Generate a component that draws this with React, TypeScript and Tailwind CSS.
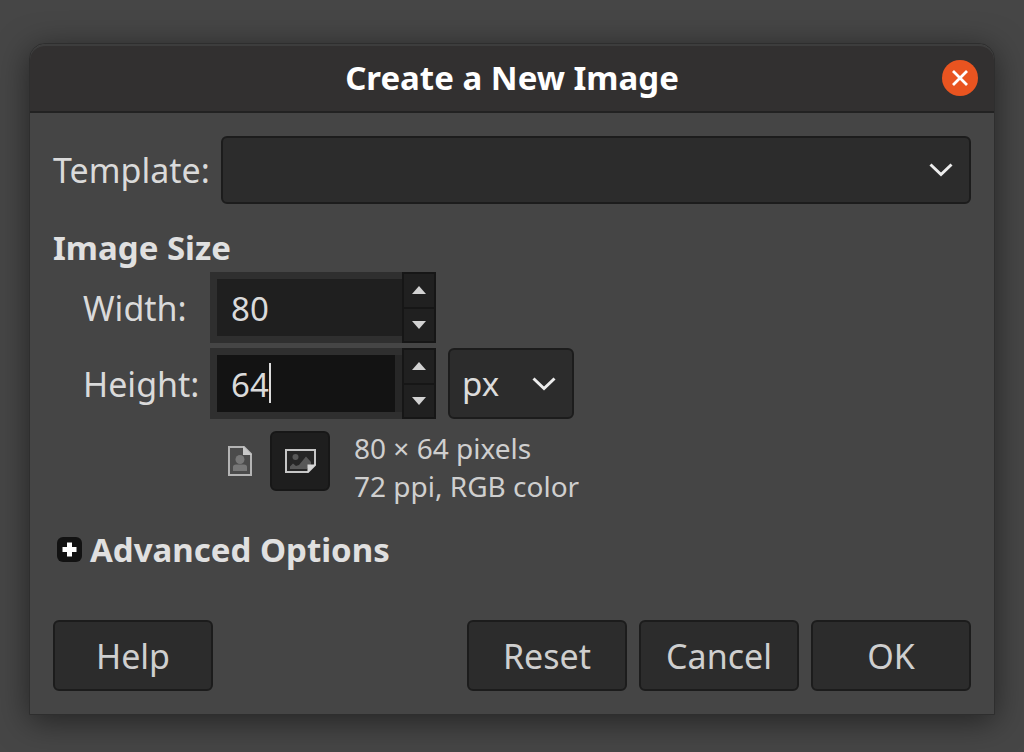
import { useState, type ReactNode } from "react";

function Chevron({ className }: { className: string }) {
  return (
    <svg
      viewBox="0 0 24 14"
      className={`pointer-events-none absolute top-1/2 h-3.5 w-6 -translate-y-1/2 ${className}`}
      fill="none"
      stroke="#ededed"
      strokeWidth="3"
      aria-hidden="true"
    >
      <path d="M1.5 1.5 12 11.5 22.5 1.5" />
    </svg>
  );
}

function SpinButton({ label, up, onClick }: { label: string; up?: boolean; onClick: () => void }) {
  return (
    <button
      type="button"
      aria-label={label}
      onClick={onClick}
      className={`flex w-full flex-1 items-center justify-center border-2 border-[#161616] bg-[#202020] ${up ? "border-b-1" : "border-t-1"}`}
    >
      <svg viewBox="0 0 14 8" className="h-2 w-3.5" fill="#d2d2d2" aria-hidden="true">
        {up ? <path d="M7 0 14 8H0Z" /> : <path d="M0 0h14L7 8Z" />}
      </svg>
    </button>
  );
}

function SpinBox({ id, name, value, active, onChange }: {
  id: string;
  name: string;
  value: number;
  active?: boolean;
  onChange: (value: number) => void;
}) {
  return (
    <div className="flex h-[71px] w-[226px] text-[33px]">
      <div className={`relative flex flex-1 border-y-[7px] border-l-[7px] border-[#2f2f2f] ${active ? "bg-[#272727] pr-[7px]" : "bg-[#1f1f1f]"}`}>
        <input
          id={id}
          type="text"
          inputMode="numeric"
          value={value}
          onChange={(e) => onChange(Number(e.target.value) || 0)}
          className={`w-full min-w-0 pt-0.5 pl-3.5 caret-transparent outline-none ${active ? "bg-[#131313]" : "bg-[#1f1f1f]"}`}
        />
        {active && <span className="absolute top-2 left-[52px] h-10 w-0.5 bg-[#dcdcdc]" />}
      </div>
      <div className="flex w-[34px] flex-col">
        <SpinButton up label={`Increase ${name}`} onClick={() => onChange(value + 1)} />
        <SpinButton label={`Decrease ${name}`} onClick={() => onChange(Math.max(1, value - 1))} />
      </div>
    </div>
  );
}

function DialogButton({ children }: { children: ReactNode }) {
  return (
    <button type="button" className="h-[71px] w-40 rounded-md border-2 border-[#1c1c1c] bg-[#2c2c2c] text-[#cfcfcf]">
      {children}
    </button>
  );
}

const selectClass =
  "w-full appearance-none rounded-md border-2 border-[#1c1c1c] bg-[#2c2c2c] pl-3 text-[33px] text-[#dcdcdc] outline-none";

export default function App() {
  const [width, setWidth] = useState(80);
  const [height, setHeight] = useState(64);

  return (
    <main className="min-h-screen overflow-hidden bg-[#464646] px-[29px] pt-[43px] pb-9 font-['Noto_Sans',sans-serif] text-[34px] leading-[48px] text-[#dadada]">
      <section
        role="dialog"
        aria-labelledby="title"
        className="rounded-t-2xl border border-[#2e2e2e] bg-[#454545] shadow-[0_6px_32px_rgba(0,0,0,0.5)]"
      >
        <header className="grid h-[69px] grid-cols-[1fr_auto_1fr] items-center rounded-t-2xl border-t-2 border-b-2 border-t-[#3d3d3d] border-b-[#222222] bg-[#323030] px-4 pb-0.5">
          <h1 id="title" className="col-start-2 text-[33px] font-bold text-white">Create a New Image</h1>
          <button type="button" aria-label="Close" className="size-9 justify-self-end rounded-full bg-[#e95420]">
            <svg viewBox="0 0 36 36" className="size-9" fill="none" stroke="#ffffff" strokeWidth="2.8" aria-hidden="true">
              <path d="M11 11 25 25M25 11 11 25" />
            </svg>
          </button>
        </header>

        <form className="p-[23px]" onSubmit={(e) => e.preventDefault()}>
          <div className="flex items-center gap-3">
            <label htmlFor="template" className="w-[156px] whitespace-nowrap">Template:</label>
            <div className="relative flex-1">
              <select id="template" defaultValue="" className={`block h-[68px] ${selectClass}`}>
                <option value="" />
              </select>
              <Chevron className="right-[18px]" />
            </div>
          </div>

          <h2 className="mt-5 text-[33px] font-bold text-[#e0e0e0]">Image Size</h2>

          <div className="grid grid-cols-[127px_auto_138px] items-center justify-start gap-y-[5px] pl-[30px]">
            <label htmlFor="width">Width:</label>
            <SpinBox id="width" name="width" value={width} onChange={setWidth} />
            <span />
            <label htmlFor="height">Height:</label>
            <SpinBox id="height" name="height" value={height} active onChange={setHeight} />
            <div className="relative ml-3">
              <select aria-label="Unit" defaultValue="px" className={`block h-[71px] ${selectClass}`}>
                <option>px</option>
              </select>
              <Chevron className="right-[18px]" />
            </div>
          </div>

          <div className="mt-2.5 flex items-start pl-[157px]">
            <div className="flex pt-0.5">
              <button type="button" aria-label="Portrait" className="flex size-[60px] items-center justify-center">
                <svg viewBox="0 0 24 30" className="h-[30px] w-6" aria-hidden="true">
                  <path d="M1 1H16L23 8V29H1Z" fill="#4b4b4b" stroke="#b4b4b4" strokeWidth="2" />
                  <path d="M15 0 24 9H15Z" fill="#c8c8c8" />
                  <circle cx="12" cy="13.5" r="4.5" fill="#777777" />
                  <path d="M5 25V21Q5 18.5 8 18.5H16Q19 18.5 19 21V25Z" fill="#777777" />
                </svg>
              </button>
              <button type="button" aria-label="Landscape" aria-pressed="true" className="flex size-[60px] items-center justify-center rounded-md border-2 border-[#171717] bg-[#1e1e1e]">
                <svg viewBox="0 0 31 24" className="h-6 w-[31px]" aria-hidden="true">
                  <path d="M1 1H30V16L23 23H1Z" fill="#262626" stroke="#c6c6c6" strokeWidth="2" />
                  <circle cx="10.5" cy="8" r="3" fill="#585858" />
                  <path d="M5 20V17.5L8 14.5 11 17 14 16 21 7.5 26 13V16L22 20Z" fill="#585858" />
                  <path d="M31 15.5 22.5 24V15.5Z" fill="#d6d6d6" />
                </svg>
              </button>
            </div>
            <p className="pl-6 text-[28px] leading-[38px] text-[#cfcfcf]">
              {width} × {height} pixels
              <br />
              72 ppi, RGB color
            </p>
          </div>

          <button type="button" aria-expanded="false" className="mt-5 flex items-center gap-2 pl-1 text-[33px] font-bold text-[#e0e0e0]">
            <svg viewBox="0 0 25 25" className="size-[25px]" aria-hidden="true">
              <rect width="25" height="25" rx="6" fill="#121212" />
              <path d="M10 5.5H15V10H19.5V15H15V19.5H10V15H5.5V10H10Z" fill="#ffffff" />
            </svg>
            <span className="pt-0.5 leading-[46px]">Advanced Options</span>
          </button>

          <footer className="mt-[47px] flex justify-between">
            <DialogButton>Help</DialogButton>
            <div className="flex gap-3">
              <DialogButton>Reset</DialogButton>
              <DialogButton>Cancel</DialogButton>
              <DialogButton>OK</DialogButton>
            </div>
          </footer>
        </form>
      </section>
    </main>
  );
}
